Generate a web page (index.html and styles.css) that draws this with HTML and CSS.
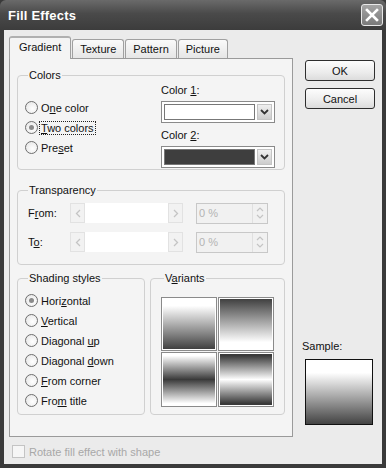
FILE: index.html
```html
<!DOCTYPE html>
<html lang="en">
<head>
    <meta charset="UTF-8">
    <title>Fill Effects</title>
    <link rel="stylesheet" href="styles.css">
</head>
<body>
<div class="window">
    <div class="titlebar">
        <span class="title">Fill Effects</span>
        <span class="close">
            <svg width="14" height="14" viewBox="0 0 14 14"><path d="M2 2 L12 12 M12 2 L2 12" stroke="#fff" stroke-width="2.6" stroke-linecap="square"/></svg>
        </span>
    </div>

    <div class="client">
        <div class="main">
            <div class="tabbox">
                <div class="tabs">
                    <span class="tab active">Gradient</span>
                    <span class="tab">Texture</span>
                    <span class="tab">Pattern</span>
                    <span class="tab">Picture</span>
                </div>

                <div class="panel">
                    <!-- Colors -->
                    <fieldset class="group colors">
                        <legend>Colors</legend>
                        <div class="color-radios">
                            <label class="radio"><span class="dot"></span><span>O<u>n</u>e color</span></label>
                            <label class="radio checked"><span class="dot"></span><span class="focus"><u>T</u>wo colors</span></label>
                            <label class="radio"><span class="dot"></span><span>Pre<u>s</u>et</span></label>
                        </div>
                        <div class="color-picks">
                            <div class="pick-label">Color <u>1</u>:</div>
                            <div class="combo">
                                <span class="swatch light"></span>
                                <span class="drop"><svg width="9" height="6" viewBox="0 0 9 6"><path d="M1 1 L4.5 4.5 L8 1" fill="none" stroke="#333" stroke-width="1.8"/></svg></span>
                            </div>
                            <div class="pick-label second">Color <u>2</u>:</div>
                            <div class="combo">
                                <span class="swatch dark"></span>
                                <span class="drop"><svg width="9" height="6" viewBox="0 0 9 6"><path d="M1 1 L4.5 4.5 L8 1" fill="none" stroke="#333" stroke-width="1.8"/></svg></span>
                            </div>
                        </div>
                    </fieldset>

                    <!-- Transparency -->
                    <fieldset class="group transparency">
                        <legend>Transparency</legend>
                        <div class="trow">
                            <span class="tlabel">F<u>r</u>om:</span>
                            <div class="slider">
                                <span class="sbtn"><svg width="6" height="9" viewBox="0 0 6 9"><path d="M5 1 L1.5 4.5 L5 8" fill="none" stroke="#c4c4c4" stroke-width="1.3"/></svg></span>
                                <span class="strack"></span>
                                <span class="sbtn"><svg width="6" height="9" viewBox="0 0 6 9"><path d="M1 1 L4.5 4.5 L1 8" fill="none" stroke="#c4c4c4" stroke-width="1.3"/></svg></span>
                            </div>
                            <div class="spin">
                                <span class="spin-val">0 %</span>
                                <span class="spin-btns">
                                    <svg width="8" height="16" viewBox="0 0 8 16"><path d="M1 6 L4 3 L7 6 M1 10 L4 13 L7 10" fill="none" stroke="#c4c4c4" stroke-width="1.2"/></svg>
                                </span>
                            </div>
                        </div>
                        <div class="trow">
                            <span class="tlabel">T<u>o</u>:</span>
                            <div class="slider">
                                <span class="sbtn"><svg width="6" height="9" viewBox="0 0 6 9"><path d="M5 1 L1.5 4.5 L5 8" fill="none" stroke="#c4c4c4" stroke-width="1.3"/></svg></span>
                                <span class="strack"></span>
                                <span class="sbtn"><svg width="6" height="9" viewBox="0 0 6 9"><path d="M1 1 L4.5 4.5 L1 8" fill="none" stroke="#c4c4c4" stroke-width="1.3"/></svg></span>
                            </div>
                            <div class="spin">
                                <span class="spin-val">0 %</span>
                                <span class="spin-btns">
                                    <svg width="8" height="16" viewBox="0 0 8 16"><path d="M1 6 L4 3 L7 6 M1 10 L4 13 L7 10" fill="none" stroke="#c4c4c4" stroke-width="1.2"/></svg>
                                </span>
                            </div>
                        </div>
                    </fieldset>

                    <div class="bottom-groups">
                        <fieldset class="group shading">
                            <legend>Shading styles</legend>
                            <label class="radio checked"><span class="dot"></span><span>Hori<u>z</u>ontal</span></label>
                            <label class="radio"><span class="dot"></span><span><u>V</u>ertical</span></label>
                            <label class="radio"><span class="dot"></span><span>Diagonal <u>u</u>p</span></label>
                            <label class="radio"><span class="dot"></span><span>Diagonal <u>d</u>own</span></label>
                            <label class="radio"><span class="dot"></span><span><u>F</u>rom corner</span></label>
                            <label class="radio"><span class="dot"></span><span>Fro<u>m</u> title</span></label>
                        </fieldset>
                        <fieldset class="group variants">
                            <legend>V<u>a</u>riants</legend>
                            <div class="tiles">
                                <span class="tile v1"></span>
                                <span class="tile v2"></span>
                                <span class="tile v3"></span>
                                <span class="tile v4"></span>
                            </div>
                        </fieldset>
                    </div>
                </div>
            </div>

            <div class="side">
                <button class="btn">OK</button>
                <button class="btn">Cancel</button>
                <div class="sample-label">Sample:</div>
                <div class="sample"></div>
            </div>
        </div>

        <label class="rotate"><span class="box"></span><span>Rotate fill effect with shape</span></label>
    </div>
</div>
</body>
</html>
```

FILE: styles.css
```css
* {
    box-sizing: border-box;
}
body {
    margin: 0;
    font-family: "Liberation Sans", Arial, sans-serif;
    font-size: 11px;
    color: #111;
}
u {
    text-decoration: underline;
    text-underline-offset: 1px;
}
.window {
    width: 386px;
    height: 468px;
    background: #3a3a3a;
    display: flex;
    flex-direction: column;
    padding: 0 4px 4px 4px;
}
.titlebar {
    height: 30px;
    margin: 0 -4px;
    padding: 0 3px 0 8px;
    display: flex;
    align-items: center;
    justify-content: space-between;
    background: linear-gradient(#6a6a6a, #4a4a4a 45%, #3c3c3c);
    border-radius: 6px 6px 0 0;
}
.title {
    color: #fff;
    font-weight: bold;
    font-size: 13px;
    letter-spacing: 0.2px;
}
.close {
    width: 22px;
    height: 22px;
    border: 1px solid #e8e8e8;
    border-radius: 3px;
    background: linear-gradient(#a4a4a4, #7a7a7a);
    display: flex;
    align-items: center;
    justify-content: center;
}
.client {
    flex: 1;
    background: #ebebeb;
    padding: 6px 0 0 5px;
    display: flex;
    flex-direction: column;
}
.main {
    display: flex;
    gap: 12px;
}
.tabbox {
    width: 284px;
}
.tabs {
    display: flex;
    align-items: flex-end;
    height: 22px;
    gap: 1px;
}
.tab {
    height: 19px;
    padding: 3px 7px 0 7px;
    border: 1px solid #a0a0a0;
    border-bottom: none;
    border-radius: 3px 3px 0 0;
    background: linear-gradient(#fafafa, #e6e6e6);
}
.tab.active {
    height: 23px;
    padding: 3px 9px 0 9px;
    background: #f4f4f4;
    margin-bottom: -1px;
    position: relative;
    border-top: 2px solid #b0b0b0;
}
.panel {
    height: 379px;
    border: 1px solid #9a9a9a;
    background: #f4f4f4;
    padding: 10px 7px 0 7px;
}
.group {
    margin: 0;
    border: 1px solid #d0d0d0;
    border-radius: 4px;
    padding: 0;
    min-width: 0;
}
.group legend {
    padding: 0 1px;
    margin-left: 3px;
    line-height: 12px;
}
.colors {
    height: 101px;
    display: flex;
    padding: 0 0 0 7px;
}
.color-radios {
    width: 136px;
    padding-top: 19px;
    display: flex;
    flex-direction: column;
    gap: 5px;
}
.radio {
    display: flex;
    align-items: center;
    gap: 3px;
    height: 15px;
}
.dot {
    flex: none;
    width: 13px;
    height: 13px;
    border-radius: 50%;
    border: 1px solid #6e6e6e;
    background: radial-gradient(circle at 60% 60%, #ffffff, #e2e2e2);
    display: inline-flex;
    align-items: center;
    justify-content: center;
}
.radio.checked .dot::after {
    content: "";
    width: 5px;
    height: 5px;
    border-radius: 50%;
    background: #8a8a8a;
}
.focus {
    outline: 1px dotted #222;
    padding: 0 1px;
    margin-left: -1px;
}
.color-picks {
    padding-top: 3px;
}
.pick-label {
    height: 15px;
}
.pick-label.second {
    margin-top: 6px;
}
.combo {
    margin-top: 2px;
    width: 114px;
    height: 22px;
    border: 1px solid #8a8a8a;
    display: flex;
    align-items: center;
    padding: 2px;
    gap: 2px;
    background: #fff;
}
.swatch {
    flex: 1;
    height: 16px;
    border: 1px solid #777;
}
.swatch.light {
    background: #fff;
}
.swatch.dark {
    background: #3e3e3e;
}
.drop {
    width: 15px;
    height: 16px;
    background: linear-gradient(#f0f0f0, #cdcdcd);
    border: 1px solid #c4c4c4;
    display: flex;
    align-items: center;
    justify-content: center;
}
.transparency {
    margin-top: 14px;
    height: 81px;
    padding: 6px 0 0 7px;
}
.trow {
    display: flex;
    align-items: center;
    height: 22px;
    margin-bottom: 7px;
}
.tlabel {
    width: 45px;
    padding-left: 3px;
}
.slider {
    width: 113px;
    height: 20px;
    display: flex;
    background: #fff;
}
.sbtn {
    width: 15px;
    height: 20px;
    border: 1px solid #e2e2e2;
    background: #f2f2f2;
    display: flex;
    align-items: center;
    justify-content: center;
}
.strack {
    flex: 1;
}
.spin {
    margin-left: 13px;
    width: 72px;
    height: 21px;
    border: 1px solid #c8c8c8;
    background: #f1f1f1;
    display: flex;
    align-items: center;
}
.spin-val {
    flex: 1;
    color: #b4b4b4;
    padding-left: 2px;
}
.spin-btns {
    width: 15px;
    height: 19px;
    display: flex;
    align-items: center;
    justify-content: center;
    border-left: 1px solid #e0e0e0;
}
.bottom-groups {
    margin-top: 7px;
    display: flex;
    gap: 5px;
}
.shading {
    width: 128px;
    height: 143px;
    padding: 9px 0 0 7px;
    display: flex;
    flex-direction: column;
    gap: 5px;
}
.variants {
    width: 135px;
    height: 143px;
    padding: 13px 0 0 10px;
}
.tiles {
    display: grid;
    grid-template-columns: 56px 56px;
    grid-template-rows: 54px 55px;
    gap: 1px;
}
.tile {
    border: 1px solid #8a8a8a;
    box-shadow: inset 0 0 0 1px #fff;
}
.v1 {
    background: linear-gradient(#fff 15%, #3c3c3c 100%);
}
.v2 {
    background: linear-gradient(#3c3c3c 0%, #fff 85%);
}
.v3 {
    background: linear-gradient(#fff 5%, #3a3a3a 50%, #fff 95%);
}
.v4 {
    background: linear-gradient(#3a3a3a 5%, #fff 50%, #3a3a3a 95%);
}
.side {
    padding-top: 24px;
    width: 70px;
    display: flex;
    flex-direction: column;
}
.btn {
    font: inherit;
    width: 70px;
    height: 21px;
    border: 1px solid #2e2e2e;
    border-radius: 3px;
    background: linear-gradient(#fdfdfd, #ececec 60%, #dcdcdc);
    color: #111;
    padding: 0;
    margin-bottom: 7px;
}
.sample-label {
    margin-top: 224px;
    margin-left: -3px;
    height: 14px;
}
.sample {
    margin-top: 5px;
    width: 68px;
    height: 66px;
    border: 1px solid #111;
    background: linear-gradient(#fff 20%, #434343 100%);
}
.rotate {
    margin-top: 8px;
    display: flex;
    align-items: center;
    gap: 4px;
    color: #a8a8a8;
    padding-left: 3px;
}
.box {
    width: 13px;
    height: 13px;
    border: 1px solid #c4c4c4;
    background: #f6f6f6;
}
```
